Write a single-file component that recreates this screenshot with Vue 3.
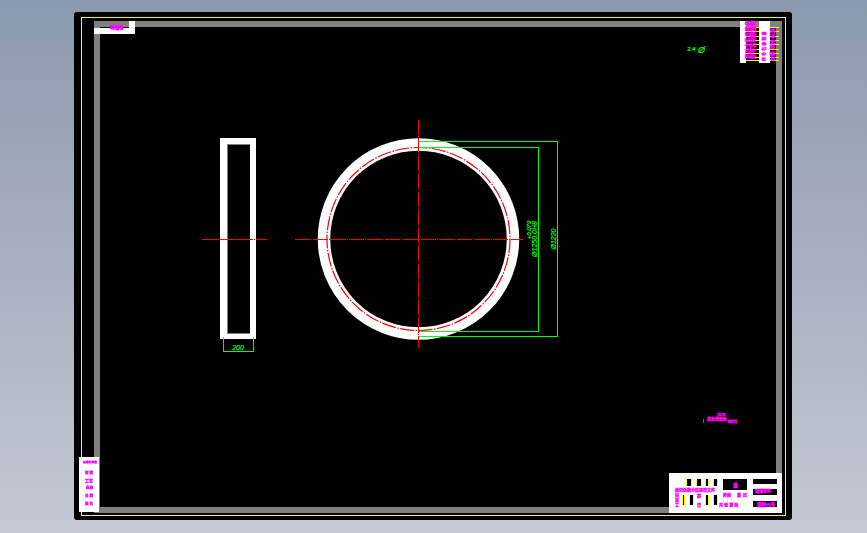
<template>
  <div class="page">
    <div class="sheet">
      <!-- viewBox uses window coordinates so the drawing can be read off the screenshot -->
      <svg class="drawing" viewBox="74 12 718 508" width="718" height="508">
        <!-- Drawing border -->
        <rect x="81.5" y="17.5" width="703.5" height="497.5" class="yellow crisp" />
        <path d="M97 513V24H779V510H97" class="frame crisp" />

        <!-- White title tabs -->
        <path d="M94 28H129V21H135V34H94Z" fill="#fff" class="crisp" />
        <rect x="79" y="457" width="20" height="55" fill="#fff" class="crisp" />
        <rect x="740" y="21" width="6" height="42" fill="#fff" class="crisp" />

        <!-- Top right revision table -->
        <line
          v-for="y in tableRows"
          :key="y"
          x1="746"
          x2="779"
          :y1="y"
          :y2="y"
          class="yellow crisp"
        />
        <rect x="759" y="21" width="11" height="42" fill="#fff" class="crisp" />

        <!-- Title block -->
        <rect x="669" y="473" width="113" height="40" fill="#fff" class="crisp" />
        <rect x="723" y="479" width="24" height="11" fill="#000" class="crisp" />
        <rect x="753" y="479" width="24" height="5" fill="#000" class="crisp" />
        <rect x="753" y="489" width="24" height="6" fill="#000" class="crisp" />
        <rect x="753" y="501" width="24" height="6" fill="#000" class="crisp" />
        <g v-for="cell in blockCells" :key="cell.x + '-' + cell.y">
          <rect :x="cell.x" :y="cell.y" :width="cell.w" :height="cell.h" fill="#000" class="crisp" />
          <line :x1="cell.x - 0.5" :x2="cell.x - 0.5" :y1="cell.y" :y2="cell.y + cell.h" class="yellow crisp" />
          <line :x1="cell.x + cell.w + 0.5" :x2="cell.x + cell.w + 0.5" :y1="cell.y" :y2="cell.y + cell.h" class="yellow crisp" />
        </g>
        <line v-for="x in [723, 727, 731]" :key="x" :x1="x" :x2="x" y1="498" y2="505" class="yellow crisp" />

        <!-- Magenta notes -->
        <text
          v-for="note in notes"
          :key="note.text + note.x + note.y"
          :x="note.x"
          :y="note.y"
          :font-size="note.size"
          class="note"
        >{{ note.text }}</text>
        <text
          v-for="note in sideNotes"
          :key="note.text + note.y"
          :transform="`translate(${note.x} ${note.y}) rotate(-90)`"
          :font-size="note.size"
          class="note"
        >{{ note.text }}</text>
        <line x1="703.5" x2="703.5" y1="419" y2="423" class="tick crisp" />

        <!-- Side view -->
        <path d="M220 138H256V339H220ZM227 144V333H250V144Z" fill="#fff" fill-rule="evenodd" class="crisp" />
        <path d="M227 333V144H250" class="edge crisp" />
        <path d="M227 333H250" class="edge crisp" />
        <line x1="202" x2="267" y1="239.5" y2="239.5" class="center crisp" />
        <path d="M223.5 337V351.5H253.5V337" class="green crisp" />
        <text x="238" y="350" class="dim" text-anchor="middle">200</text>

        <!-- Ring -->
        <circle cx="418.5" cy="239" r="94.5" class="ring" />
        <circle cx="418.5" cy="239" r="91.5" class="center-circle" />
        <path d="M418.5 141.5H557V336.5H418.5" class="green crisp" />
        <path d="M418.5 147H538.5V331.5H418.5" class="green crisp" />
        <line x1="295" x2="523" y1="239.5" y2="239.5" class="center crisp" />
        <line x1="418.5" x2="418.5" y1="120" y2="348" class="center crisp" />

        <!-- Dimensions -->
        <text transform="translate(556 239) rotate(-90)" class="dim" text-anchor="middle">Ø1220</text>
        <text transform="translate(537 239) rotate(-90)" class="dim" text-anchor="middle">Ø1250.0H8</text>
        <text transform="translate(531 230) rotate(-90)" class="dim small" text-anchor="middle">+0.079</text>
        <text x="687" y="51" class="dim small">3.4</text>
        <text x="698" y="53" class="dim big">Ø</text>
      </svg>
    </div>
  </div>
</template>

<script setup>
const tableRows = [27.5, 31.5, 36.5, 40.5, 44.5, 49.5, 53.5, 57.5, 60.5]

const blockCells = [
  { x: 687, y: 479, w: 4, h: 7 },
  { x: 697, y: 479, w: 4, h: 7 },
  { x: 706, y: 479, w: 2, h: 7 },
  { x: 714, y: 479, w: 3, h: 7 },
  { x: 683, y: 495, w: 1, h: 10 },
  { x: 690, y: 495, w: 3, h: 10 },
  { x: 706, y: 495, w: 2, h: 10 },
  { x: 714, y: 495, w: 3, h: 10 },
]

const notes = [
  { x: 110, y: 29, size: 4.5, text: '明细表' },
  { x: 83, y: 463, size: 2.8, text: '标准化检查' },
  { x: 85, y: 474, size: 3.5, text: '审 核' },
  { x: 85, y: 483, size: 4, text: '工艺' },
  { x: 86, y: 489, size: 3.5, text: '批准' },
  { x: 85, y: 497, size: 3.5, text: '日 期' },
  { x: 85, y: 505, size: 3.5, text: '签 名' },
  { x: 675, y: 492, size: 4, text: '标记处数分区更改文件' },
  { x: 675, y: 497, size: 4, text: '设' },
  { x: 675, y: 502, size: 4, text: '审' },
  { x: 675, y: 507, size: 4, text: '工' },
  { x: 697, y: 498, size: 4, text: '签' },
  { x: 697, y: 507, size: 4, text: '日' },
  { x: 723, y: 497, size: 4, text: '阶段' },
  { x: 737, y: 497, size: 4, text: '重' },
  { x: 743, y: 497, size: 4, text: '比' },
  { x: 719, y: 507, size: 4, text: '共 张 第 张' },
  { x: 733, y: 487, size: 5, text: '盖' },
  { x: 755, y: 493, size: 4, text: '端盖零件' },
  { x: 757, y: 506, size: 4.5, text: '图样代号' },
  { x: 717, y: 416, size: 3, text: '1/2 20' },
  { x: 707, y: 421, size: 4, text: '其余表面处' },
  { x: 728, y: 423, size: 3, text: '理方法' },
]

// rotated text in the revision table
const sideNotes = [
  { x: 750, y: 59, size: 5.5, text: '更改文件号签名' },
  { x: 755, y: 59, size: 5.5, text: '序号名称数量材' },
  { x: 766, y: 61, size: 4, text: '序 号 名 称 数 量' },
  { x: 774, y: 61, size: 5, text: '材料 规格 标准' },
]
</script>

<style scoped>
.page {
  width: 867px;
  height: 533px;
  overflow: hidden;
  padding-top: 12px;
  box-sizing: border-box;
  background: linear-gradient(#8b99ae, #c4c8d2);
}

.sheet {
  width: 718px;
  height: 508px;
  margin-left: 74px;
  background: #000;
  border-radius: 3px;
}

.drawing {
  display: block;
}

.crisp {
  shape-rendering: crispEdges;
}

.yellow {
  fill: none;
  stroke: #ffff00;
  stroke-width: 1;
}

.frame {
  fill: none;
  stroke: #808080;
  stroke-width: 6;
}

.edge {
  fill: none;
  stroke: #808080;
  stroke-width: 1;
}

.green {
  fill: none;
  stroke: #00ff00;
  stroke-width: 1;
}

.tick {
  stroke: #ff00ff;
  stroke-width: 1;
}

.ring {
  fill: none;
  stroke: #fff;
  stroke-width: 12.5;
}

.center {
  stroke: #ff0000;
  stroke-width: 1;
  stroke-dasharray: 15 1 1 1;
}

.center-circle {
  fill: none;
  stroke: #ff0000;
  stroke-width: 1.2;
  stroke-dasharray: 14 1.5 1.5 1.5;
}

.dim {
  font-family: "Liberation Sans", sans-serif;
  font-size: 7px;
  font-style: italic;
  fill: #00ff00;
  stroke: #00ff00;
  stroke-width: 0.2;
}

.dim.small {
  font-size: 6px;
}

.dim.big {
  font-size: 9px;
}

.note {
  font-family: "Liberation Sans", "Noto Sans CJK SC", sans-serif;
  font-weight: 700;
  fill: #ff00ff;
  stroke: #ff00ff;
  stroke-width: 0.3;
}
</style>
